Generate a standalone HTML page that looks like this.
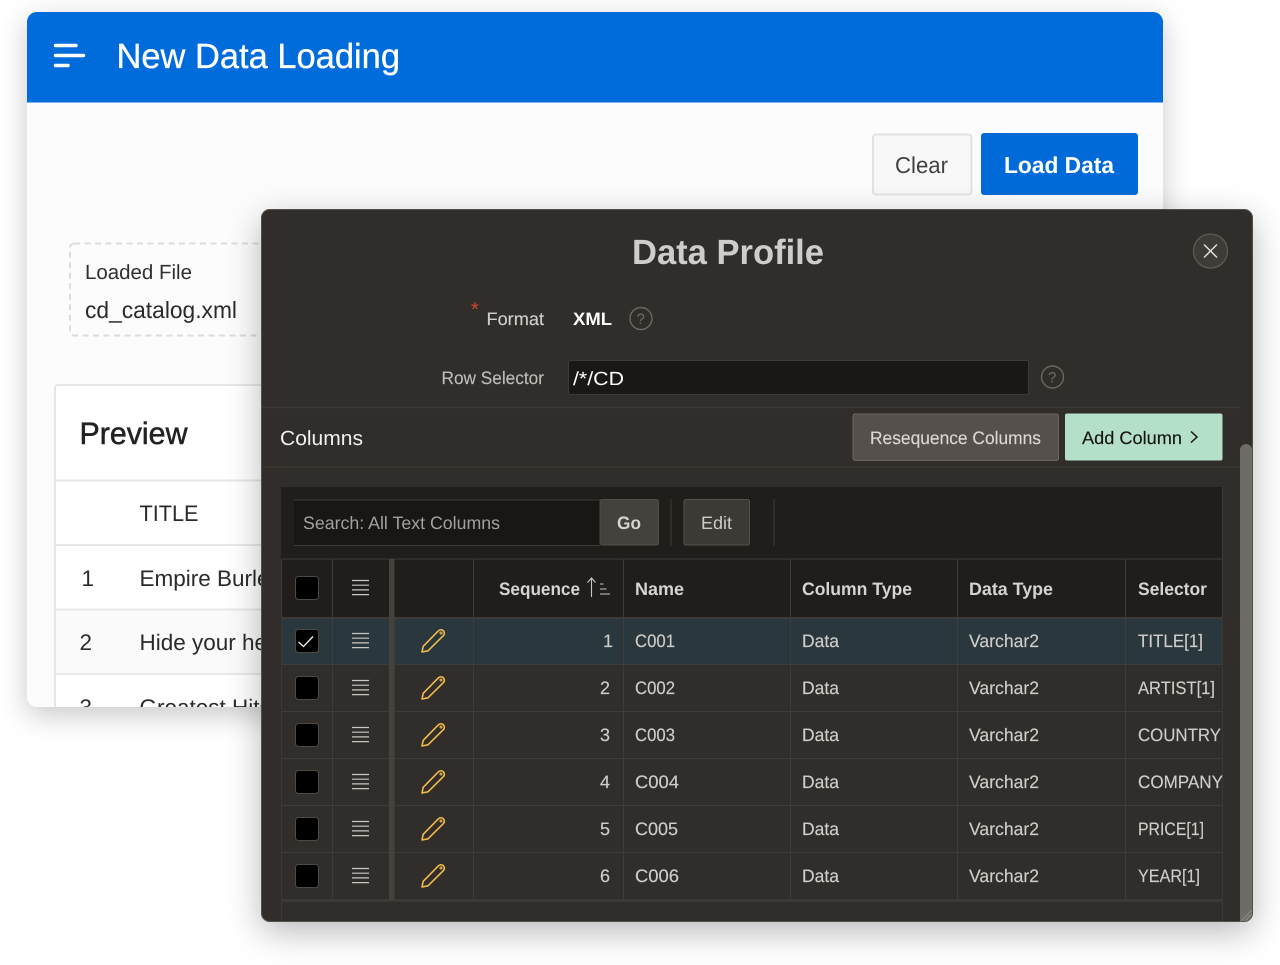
<!DOCTYPE html>
<html lang="en"><head><meta charset="utf-8"><title>Data Profile</title>
<style>
html,body{margin:0;padding:0;background:#fff;width:1280px;height:965px;overflow:hidden}
.card{position:absolute;left:27px;top:12px;width:1136px;height:695px;border-radius:10px;background:#fcfcfc;box-shadow:0 8px 28px rgba(0,0,0,.22)}
.dlg{position:absolute;left:261px;top:209px;width:992px;height:713px;border-radius:9px;background:#312d2a;box-shadow:0 10px 34px rgba(0,0,0,.28)}
svg{position:absolute;left:0;top:0}
text{font-family:"Liberation Sans",sans-serif;text-rendering:geometricPrecision}
.d{font-size:18px;fill:#cfcdca;stroke:#cfcdca;stroke-width:.15}
.h{font-size:18px;font-weight:700;fill:#d6d4d1}
.l{font-size:22.5px;fill:#2b2b2b}
</style></head><body>
<div class="card"></div>
<svg width="1280" height="965" viewBox="0 0 1280 965">
<defs><clipPath id="c"><path d="M27 22a10 10 0 0 1 10-10H1153a10 10 0 0 1 10 10V697a10 10 0 0 1-10 10H37a10 10 0 0 1-10-10z"/></clipPath></defs>
<g clip-path="url(#c)">
<rect x="27" y="12" width="1136" height="90" fill="#006bdb"/>
<rect x="27" y="102" width="1136" height="1" fill="#7fb4ec"/>
<g stroke="#fff" stroke-width="3.400" stroke-linecap="round"><path d="M55.500 45.500H76M55.500 55.500H83.500M55.500 65.500H68"/></g>
<text x="116.500" y="68" font-size="35" fill="#fff" stroke="#fff" stroke-width=".3" textLength="283.500" lengthAdjust="spacingAndGlyphs">New Data Loading</text>
<rect x="873" y="134.500" width="98.500" height="60" rx="3" fill="#f8f8f8" stroke="#e2e2e2" stroke-width="2"/>
<text x="895" y="173" font-size="23" fill="#404040" textLength="53" lengthAdjust="spacingAndGlyphs">Clear</text>
<rect x="981" y="133" width="157" height="62" rx="3" fill="#006bd8"/>
<text x="1004" y="173" font-size="23" font-weight="700" fill="#fff" textLength="110" lengthAdjust="spacingAndGlyphs">Load Data</text>
<rect x="70" y="243.500" width="240" height="92" rx="4" fill="none" stroke="#dcdcdc" stroke-width="2" stroke-dasharray="6 4.500"/>
<text x="85" y="279" font-size="20.500" fill="#2f2f2f" textLength="107" lengthAdjust="spacingAndGlyphs">Loaded File</text>
<text x="85" y="318" font-size="23.500" fill="#2b2b2b" textLength="152" lengthAdjust="spacingAndGlyphs">cd_catalog.xml</text>
<rect x="55" y="385" width="300" height="340" rx="3" fill="#fff" stroke="#e6e6e6" stroke-width="2"/>
<rect x="56" y="610" width="300" height="64" fill="#fafafa"/>
<path d="M56 480.500H356M56 545H356M56 609.500H356M56 674H356" stroke="#e8e8e8" stroke-width="2"/>
<text x="79.500" y="444" font-size="31" fill="#222" stroke="#222" stroke-width=".5" textLength="108" lengthAdjust="spacingAndGlyphs">Preview</text>
<text x="139.500" y="521" class="l" textLength="59" lengthAdjust="spacingAndGlyphs">TITLE</text>
<text x="81.500" y="586" class="l">1</text>
<text x="139.500" y="586" class="l">Empire Burlesque</text>
<text x="79.500" y="650" class="l">2</text>
<text x="139.500" y="650" class="l">Hide your heart</text>
<text x="79.500" y="715" class="l">3</text>
<text x="139.500" y="715" class="l">Greatest Hits</text>
</g>
</svg>
<div class="dlg"></div>
<svg width="1280" height="965" viewBox="0 0 1280 965">
<defs>
<clipPath id="dc"><rect x="261" y="209" width="992" height="713" rx="9"/></clipPath>
<g id="p" fill="none" stroke="#f0bb4c" stroke-width="1.600" stroke-linejoin="round"><path d="M422 652l1.200-5.700L438.400 630.800a3.400 3.400 0 0 1 5 4.800L428 650.800z"/><circle cx="441" cy="633" r="1" stroke-width="1"/></g>
<g id="m" stroke="#c9c7c4" stroke-width="1.200"><path d="M352 580.500H369M352 585.200H369M352 589.900H369M352 594.600H369"/></g>
<rect id="b" x="295.500" y="576.500" width="23" height="23" rx="3" fill="#000" stroke="#4d4a46"/>
</defs>
<g clip-path="url(#dc)">
<!-- title -->
<text x="632" y="264" font-size="35" font-weight="700" fill="#cfcdca" textLength="192" lengthAdjust="spacingAndGlyphs">Data Profile</text>
<circle cx="1210.500" cy="251" r="17" fill="#3f3b37" stroke="#5e5a56" stroke-width="1.300"/>
<path d="M1204 244.500l13 13M1217 244.500l-13 13" stroke="#dedcd9" stroke-width="1.500" fill="none"/>
<text x="471" y="316" font-size="20" fill="#d1492e">*</text>
<text x="486.500" y="325" font-size="18" fill="#cfcdca" stroke="#cfcdca" stroke-width=".15" textLength="57.500" lengthAdjust="spacingAndGlyphs">Format</text>
<text x="573" y="325" font-size="18" font-weight="700" fill="#fff" textLength="39" lengthAdjust="spacingAndGlyphs">XML</text>
<circle cx="641" cy="318.500" r="11" fill="none" stroke="#6b6763" stroke-width="1.400"/>
<text x="636.500" y="324" font-size="15" fill="#6f6b67">?</text>
<text x="441.500" y="384" font-size="18" fill="#bdbbb8" stroke="#bdbbb8" stroke-width=".15" textLength="102.500" lengthAdjust="spacingAndGlyphs">Row Selector</text>
<rect x="568.500" y="360.500" width="460" height="34" rx="2" fill="#1a1715" stroke="#3e3a37"/>
<text x="573" y="385" font-size="19" fill="#fff" textLength="51" lengthAdjust="spacingAndGlyphs">/*/CD</text>
<circle cx="1052.500" cy="377" r="11" fill="none" stroke="#6b6763" stroke-width="1.400"/>
<text x="1048" y="382.500" font-size="15" fill="#6f6b67">?</text>
<!-- columns bar -->
<path d="M262 407.500H1240M262 467H1240" stroke="#3c3835" stroke-width="1.200"/>
<text x="280" y="445" font-size="20.500" fill="#f2f1ef" textLength="83" lengthAdjust="spacingAndGlyphs">Columns</text>
<rect x="853" y="414" width="205.500" height="46.500" rx="2" fill="#55504b" stroke="#6a6661"/>
<text x="870" y="444" font-size="18" fill="#d9d7d4" stroke="#d9d7d4" stroke-width=".15" textLength="171" lengthAdjust="spacingAndGlyphs">Resequence Columns</text>
<rect x="1065" y="413.500" width="157.500" height="47" rx="2" fill="#b4dfc8"/>
<text x="1082" y="444" font-size="18" fill="#161513" stroke="#161513" stroke-width=".15" textLength="100" lengthAdjust="spacingAndGlyphs">Add Column</text>
<path d="M1191 431.500l6 5.500-6 5.500" fill="none" stroke="#161513" stroke-width="1.500"/>
<!-- report -->
<rect x="281" y="487" width="941" height="435" fill="#312d2a"/>
<path d="M281.500 487V922M1222.500 487V922" stroke="#3c3835"/>
<rect x="281" y="487" width="941" height="72" fill="#201d1b"/>
<rect x="294" y="500" width="306" height="45.500" fill="#191614"/>
<path d="M294 500H600M294 545.500H600" stroke="#3f3b38"/>
<text x="303" y="529" font-size="18" fill="#a3a09d" textLength="197" lengthAdjust="spacingAndGlyphs">Search: All Text Columns</text>
<rect x="600" y="499.500" width="58.500" height="45.500" rx="2" fill="#45413d" stroke="#514d49"/>
<text x="617" y="529" font-size="18" font-weight="700" fill="#d6d4d1" textLength="24" lengthAdjust="spacingAndGlyphs">Go</text>
<rect x="684" y="499.500" width="65.500" height="45.500" rx="2" fill="#3d3935" stroke="#55514d"/>
<text x="701" y="529" font-size="18" fill="#cfcdca" textLength="31" lengthAdjust="spacingAndGlyphs">Edit</text>
<path d="M671 499V546M774 499V546" stroke="#3f3b38"/>
<!-- header row -->
<rect x="282" y="559" width="940" height="59" fill="#201d1b"/>
<rect x="282" y="618" width="940" height="47" fill="#2a373c"/>
<!-- grid -->
<g stroke="#3f3b38" stroke-width="1" fill="none">
<path d="M332.500 559V900M473.500 559V900M623.500 559V900M790.500 559V900M957.500 559V900M1125.500 559V900"/>
<path d="M282 559H1222M282 664.500H1222M282 711.500H1222M282 758.500H1222M282 805.500H1222M282 852.500H1222"/>
</g>
<path d="M282 618H1222" stroke="#3f3b38" stroke-width="2"/>
<path d="M282 900.500H1222" stroke="#3f3b38" stroke-width="2.500"/>
<rect x="389" y="559" width="5.500" height="341" fill="#45413c"/>
<!-- header -->
<use href="#b"/><use href="#m"/>
<text x="499" y="595" class="h" textLength="81" lengthAdjust="spacingAndGlyphs">Sequence</text>
<path d="M591.500 597V578M587.500 582.500l4-4.500 4 4.500M600 584h3.500M600 589h6.500M600 594h10" fill="none" stroke="#c9c7c4" stroke-width="1.100"/>
<text x="635" y="595" class="h" textLength="49" lengthAdjust="spacingAndGlyphs">Name</text>
<text x="802" y="595" class="h" textLength="110" lengthAdjust="spacingAndGlyphs">Column Type</text>
<text x="969" y="595" class="h" textLength="84" lengthAdjust="spacingAndGlyphs">Data Type</text>
<text x="1138" y="595" class="h" textLength="69" lengthAdjust="spacingAndGlyphs">Selector</text>
<!-- rows -->
<g transform="translate(0,53)"><use href="#b"/><use href="#m"/></g>
<path d="M298.500 642l5 4.500 9.500-10" fill="none" stroke="#f2f1ef" stroke-width="1.300"/>
<use href="#p"/>
<text x="603" y="647" class="d">1</text><text x="635" y="647" class="d" textLength="40" lengthAdjust="spacingAndGlyphs">C001</text><text x="802" y="647" class="d" textLength="37" lengthAdjust="spacingAndGlyphs">Data</text><text x="969" y="647" class="d" textLength="70" lengthAdjust="spacingAndGlyphs">Varchar2</text><text x="1138" y="647" class="d" textLength="65" lengthAdjust="spacingAndGlyphs">TITLE[1]</text>
<g transform="translate(0,100)"><use href="#b"/><use href="#m"/></g>
<g transform="translate(0,47)"><use href="#p"/></g>
<text x="600" y="694" class="d">2</text><text x="635" y="694" class="d" textLength="40" lengthAdjust="spacingAndGlyphs">C002</text><text x="802" y="694" class="d" textLength="37" lengthAdjust="spacingAndGlyphs">Data</text><text x="969" y="694" class="d" textLength="70" lengthAdjust="spacingAndGlyphs">Varchar2</text><text x="1138" y="694" class="d" textLength="77" lengthAdjust="spacingAndGlyphs">ARTIST[1]</text>
<g transform="translate(0,147)"><use href="#b"/><use href="#m"/></g>
<g transform="translate(0,94)"><use href="#p"/></g>
<text x="600" y="741" class="d">3</text><text x="635" y="741" class="d" textLength="40" lengthAdjust="spacingAndGlyphs">C003</text><text x="802" y="741" class="d" textLength="37" lengthAdjust="spacingAndGlyphs">Data</text><text x="969" y="741" class="d" textLength="70" lengthAdjust="spacingAndGlyphs">Varchar2</text><text x="1138" y="741" class="d" textLength="83" lengthAdjust="spacingAndGlyphs">COUNTRY</text>
<g transform="translate(0,194)"><use href="#b"/><use href="#m"/></g>
<g transform="translate(0,141)"><use href="#p"/></g>
<text x="600" y="788" class="d">4</text><text x="635" y="788" class="d" textLength="44" lengthAdjust="spacingAndGlyphs">C004</text><text x="802" y="788" class="d" textLength="37" lengthAdjust="spacingAndGlyphs">Data</text><text x="969" y="788" class="d" textLength="70" lengthAdjust="spacingAndGlyphs">Varchar2</text><text x="1138" y="788" class="d" textLength="85" lengthAdjust="spacingAndGlyphs">COMPANY</text>
<g transform="translate(0,241)"><use href="#b"/><use href="#m"/></g>
<g transform="translate(0,188)"><use href="#p"/></g>
<text x="600" y="835" class="d">5</text><text x="635" y="835" class="d" textLength="43" lengthAdjust="spacingAndGlyphs">C005</text><text x="802" y="835" class="d" textLength="37" lengthAdjust="spacingAndGlyphs">Data</text><text x="969" y="835" class="d" textLength="70" lengthAdjust="spacingAndGlyphs">Varchar2</text><text x="1138" y="835" class="d" textLength="66" lengthAdjust="spacingAndGlyphs">PRICE[1]</text>
<g transform="translate(0,288)"><use href="#b"/><use href="#m"/></g>
<g transform="translate(0,235)"><use href="#p"/></g>
<text x="600" y="882" class="d">6</text><text x="635" y="882" class="d" textLength="44" lengthAdjust="spacingAndGlyphs">C006</text><text x="802" y="882" class="d" textLength="37" lengthAdjust="spacingAndGlyphs">Data</text><text x="969" y="882" class="d" textLength="70" lengthAdjust="spacingAndGlyphs">Varchar2</text><text x="1138" y="882" class="d" textLength="62" lengthAdjust="spacingAndGlyphs">YEAR[1]</text>
<!-- scrollbar -->
<path d="M1240 450a6 6 0 0 1 12 0V922H1240z" fill="#6e6c67"/>
<path d="M1241 921l11-11M1245 921l7-7M1249 921l3-3" stroke="#9a9893" stroke-width=".8"/>
</g>
<rect x="261.500" y="209.500" width="991" height="712" rx="8.500" fill="none" stroke="#5c5854" stroke-width="1" stroke-opacity=".8"/>
</svg>
</body></html>
